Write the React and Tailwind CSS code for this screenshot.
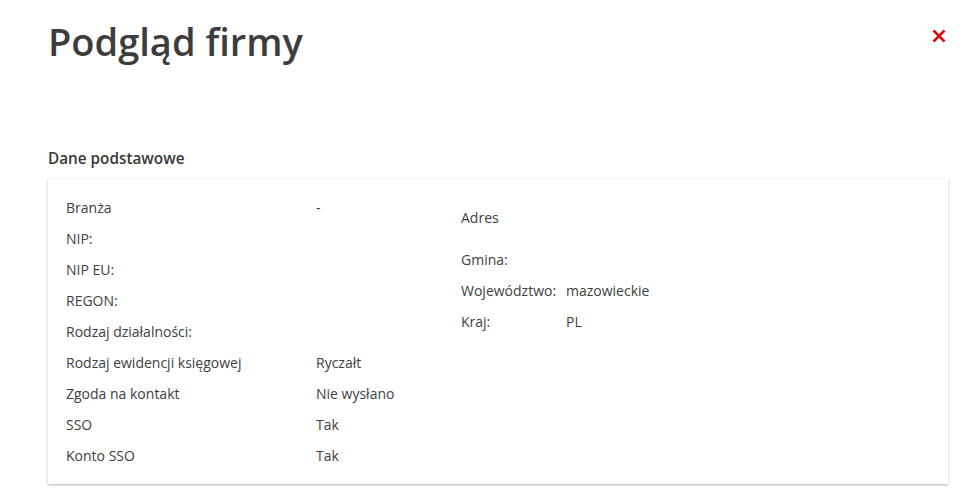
import React from "react";

const left = [
  ["Branża", "-"],
  ["NIP:", ""],
  ["NIP EU:", ""],
  ["REGON:", ""],
  ["Rodzaj działalności:", ""],
  ["Rodzaj ewidencji księgowej", "Ryczałt"],
  ["Zgoda na kontakt", "Nie wysłano"],
  ["SSO", "Tak"],
  ["Konto SSO", "Tak"],
];

const right = [
  ["Gmina:", ""],
  ["Województwo:", "mazowieckie"],
  ["Kraj:", "PL"],
];

export default function App() {
  return (
    <div
      className="min-h-[497px] w-[972px] bg-white text-[#404040]"
      style={{ fontFamily: '"Open Sans", sans-serif' }}
    >
      <div className="flex items-start justify-between pl-[48px] pr-[26px] pt-[17px]">
        <h1 className="text-[38px] leading-[48px] font-semibold text-[#3d3d3d]">Podgląd firmy</h1>
        <button className="mt-[12px]" aria-label="Zamknij">
          <svg width="14" height="14" viewBox="0 0 14 14">
            <path d="M1.5 1.5 L12.5 12.5 M12.5 1.5 L1.5 12.5" stroke="#d70f0f" strokeWidth="2.6" strokeLinecap="butt" />
          </svg>
        </button>
      </div>

      <div className="pl-[48px] pr-[24px] pt-[83px]">
        <h2 className="text-[15.3px] leading-[20px] font-semibold text-[#383838]">Dane podstawowe</h2>
        <div className="mt-[11px] bg-white shadow-[0_1px_3px_rgba(0,0,0,0.22),0_1px_1px_rgba(0,0,0,0.08)] pl-[18px] pt-[13px] pb-[13px] flex text-[14px]">
          <div className="w-[395px] flex flex-col">
            {left.map(([k, v]) => (
              <div key={k} className="flex h-[31px] items-center">
                <div className="w-[250px]">{k}</div>
                <div>{v}</div>
              </div>
            ))}
          </div>
          <div className="flex flex-col pt-[10px]">
            <div className="flex h-[31px] items-center">Adres</div>
            <div className="h-[11px]" />
            {right.map(([k, v]) => (
              <div key={k} className="flex h-[31px] items-center">
                <div className="w-[105px]">{k}</div>
                <div>{v}</div>
              </div>
            ))}
          </div>
        </div>
      </div>
    </div>
  );
}
